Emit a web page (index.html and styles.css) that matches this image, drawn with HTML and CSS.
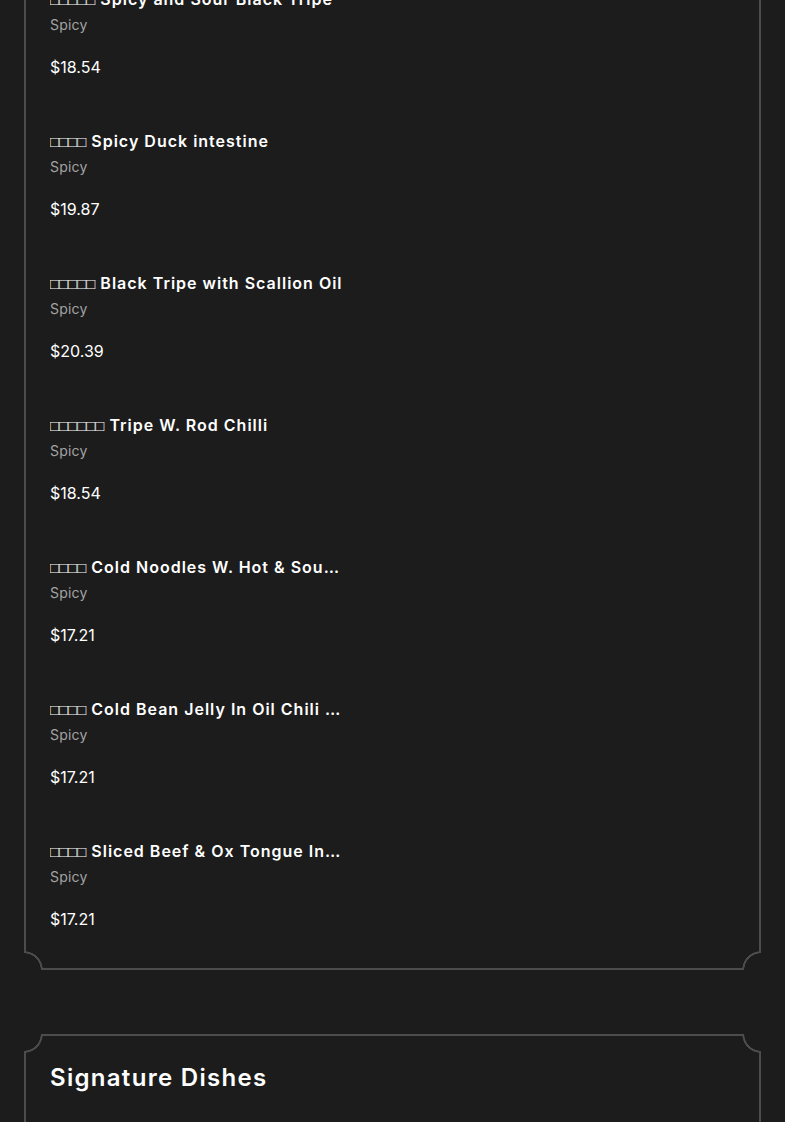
FILE: index.html
```html
<!DOCTYPE html>
<html lang="en">
<head>
<meta charset="utf-8">
<title>Menu</title>
<link rel="stylesheet" href="styles.css">
</head>
<body>
<main class="menu">
  <section class="card card-first">
    <span class="corner corner-bl"></span>
    <span class="corner corner-br"></span>
    <div class="items">
      <article class="item">
        <h3 class="item-title"><span class="tofu">□□□□□</span> Spicy and Sour Black Tripe</h3>
        <p class="item-desc">Spicy</p>
        <p class="item-price">$18.54</p>
      </article>
      <article class="item">
        <h3 class="item-title"><span class="tofu">□□□□</span> Spicy Duck intestine</h3>
        <p class="item-desc">Spicy</p>
        <p class="item-price">$19.87</p>
      </article>
      <article class="item">
        <h3 class="item-title"><span class="tofu">□□□□□</span> Black Tripe with Scallion Oil</h3>
        <p class="item-desc">Spicy</p>
        <p class="item-price">$20.39</p>
      </article>
      <article class="item">
        <h3 class="item-title"><span class="tofu">□□□□□□</span> Tripe W. Rod Chilli</h3>
        <p class="item-desc">Spicy</p>
        <p class="item-price">$18.54</p>
      </article>
      <article class="item">
        <h3 class="item-title"><span class="tofu">□□□□</span> Cold Noodles W. Hot &amp; Sour Sauce</h3>
        <p class="item-desc">Spicy</p>
        <p class="item-price">$17.21</p>
      </article>
      <article class="item">
        <h3 class="item-title"><span class="tofu">□□□□</span> Cold Bean Jelly In Oil Chili Sauce</h3>
        <p class="item-desc">Spicy</p>
        <p class="item-price">$17.21</p>
      </article>
      <article class="item">
        <h3 class="item-title"><span class="tofu">□□□□</span> Sliced Beef &amp; Ox Tongue In Chili Sauce</h3>
        <p class="item-desc">Spicy</p>
        <p class="item-price">$17.21</p>
      </article>
    </div>
  </section>

  <section class="card card-second">
    <span class="corner corner-tl"></span>
    <span class="corner corner-tr"></span>
    <h2 class="section-title">Signature Dishes</h2>
  </section>
</main>
</body>
</html>
```

FILE: styles.css
```css
html, body {
  margin: 0;
  padding: 0;
  background: #1c1c1c;
}

body {
  font-family: Inter, "Open Sans", "Liberation Sans", sans-serif;
  color: #ffffff;
  overflow: hidden;
  height: 1122px;
}

.menu {
  display: flex;
  flex-direction: column;
  gap: 64px;
  padding: 0 24px;
}

.card {
  position: relative;
  border: 2px solid #4c4c4c;
  background: #1c1c1c;
  padding: 0 24px;
}

.card-first {
  margin-top: -60px;
  padding-top: 45px;
  padding-bottom: 37px;
}

.card-second {
  padding-top: 26px;
  padding-bottom: 40px;
}

.corner {
  position: absolute;
  width: 21px;
  height: 21px;
}

.corner-bl {
  left: -2px;
  bottom: -2px;
  background: radial-gradient(circle at 0 100%, #1c1c1c 16.5px, #4c4c4c 17px, #4c4c4c 18.5px, transparent 19px);
}

.corner-br {
  right: -2px;
  bottom: -2px;
  background: radial-gradient(circle at 100% 100%, #1c1c1c 16.5px, #4c4c4c 17px, #4c4c4c 18.5px, transparent 19px);
}

.corner-tl {
  left: -2px;
  top: -2px;
  background: radial-gradient(circle at 0 0, #1c1c1c 16.5px, #4c4c4c 17px, #4c4c4c 18.5px, transparent 19px);
}

.corner-tr {
  right: -2px;
  top: -2px;
  background: radial-gradient(circle at 100% 0, #1c1c1c 16.5px, #4c4c4c 17px, #4c4c4c 18.5px, transparent 19px);
}

.items {
  display: flex;
  flex-direction: column;
  gap: 50px;
}

.item {
  display: flex;
  flex-direction: column;
}

.item-title {
  margin: 0;
  font-size: 16px;
  line-height: 24px;
  height: 24px;
  font-weight: 600;
  letter-spacing: 1px;
  max-width: 294px;
  white-space: nowrap;
  overflow: hidden;
  text-overflow: ellipsis;
}

.tofu {
  font-family: "Liberation Sans", sans-serif;
  font-size: 15px;
  font-weight: 400;
  letter-spacing: 0;
  line-height: 16px;
}

.item-desc {
  margin: 4px 0 0;
  font-size: 14px;
  line-height: 20px;
  color: #a3a3a3;
  letter-spacing: 0.2px;
}

.item-price {
  margin: 20px 0 0;
  font-size: 16px;
  line-height: 24px;
  font-weight: 400;
}

.section-title {
  margin: 0;
  font-size: 24px;
  line-height: 32px;
  font-weight: 600;
  letter-spacing: 1.3px;
}
```
